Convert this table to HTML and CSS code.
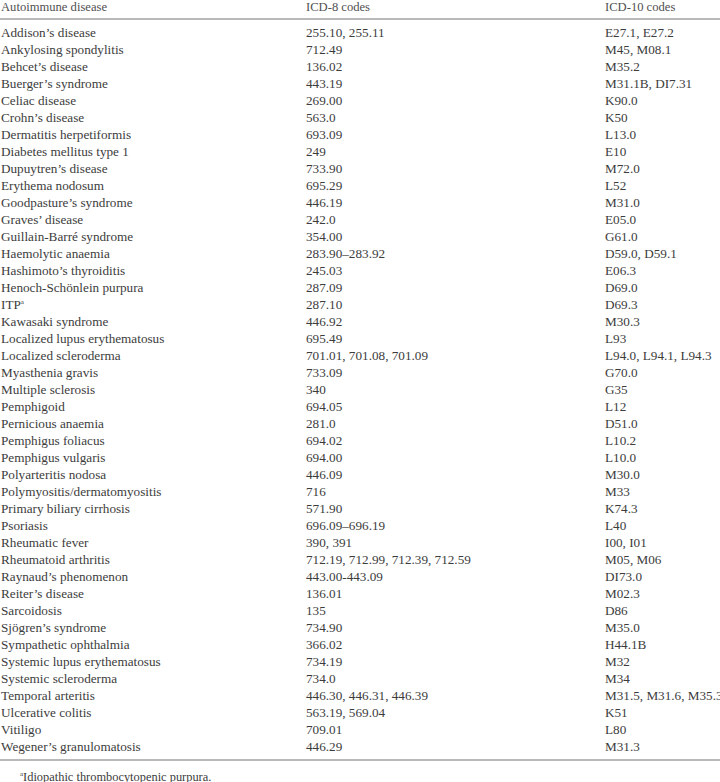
FILE: index.html
```html
<!DOCTYPE html>
<html>
<head>
<meta charset="utf-8">
<link rel="stylesheet" href="styles.css">
</head>
<body>
<table class="codes">
  <colgroup><col class="c1"><col class="c2"><col class="c3"></colgroup>
  <thead>
    <tr><th>Autoimmune disease</th><th>ICD-8 codes</th><th>ICD-10 codes</th></tr>
  </thead>
  <tbody>
    <tr class="first"><td>Addison’s disease</td><td>255.10, 255.11</td><td>E27.1, E27.2</td></tr>
    <tr><td>Ankylosing spondylitis</td><td>712.49</td><td>M45, M08.1</td></tr>
    <tr><td>Behcet’s disease</td><td>136.02</td><td>M35.2</td></tr>
    <tr><td>Buerger’s syndrome</td><td>443.19</td><td>M31.1B, DI7.31</td></tr>
    <tr><td>Celiac disease</td><td>269.00</td><td>K90.0</td></tr>
    <tr><td>Crohn’s disease</td><td>563.0</td><td>K50</td></tr>
    <tr><td>Dermatitis herpetiformis</td><td>693.09</td><td>L13.0</td></tr>
    <tr><td>Diabetes mellitus type 1</td><td>249</td><td>E10</td></tr>
    <tr><td>Dupuytren’s disease</td><td>733.90</td><td>M72.0</td></tr>
    <tr><td>Erythema nodosum</td><td>695.29</td><td>L52</td></tr>
    <tr><td>Goodpasture’s syndrome</td><td>446.19</td><td>M31.0</td></tr>
    <tr><td>Graves’ disease</td><td>242.0</td><td>E05.0</td></tr>
    <tr><td>Guillain-Barré syndrome</td><td>354.00</td><td>G61.0</td></tr>
    <tr><td>Haemolytic anaemia</td><td>283.90–283.92</td><td>D59.0, D59.1</td></tr>
    <tr><td>Hashimoto’s thyroiditis</td><td>245.03</td><td>E06.3</td></tr>
    <tr><td>Henoch-Schönlein purpura</td><td>287.09</td><td>D69.0</td></tr>
    <tr><td>ITP<sup>a</sup></td><td>287.10</td><td>D69.3</td></tr>
    <tr><td>Kawasaki syndrome</td><td>446.92</td><td>M30.3</td></tr>
    <tr><td>Localized lupus erythematosus</td><td>695.49</td><td>L93</td></tr>
    <tr><td>Localized scleroderma</td><td>701.01, 701.08, 701.09</td><td>L94.0, L94.1, L94.3</td></tr>
    <tr><td>Myasthenia gravis</td><td>733.09</td><td>G70.0</td></tr>
    <tr><td>Multiple sclerosis</td><td>340</td><td>G35</td></tr>
    <tr><td>Pemphigoid</td><td>694.05</td><td>L12</td></tr>
    <tr><td>Pernicious anaemia</td><td>281.0</td><td>D51.0</td></tr>
    <tr><td>Pemphigus foliacus</td><td>694.02</td><td>L10.2</td></tr>
    <tr><td>Pemphigus vulgaris</td><td>694.00</td><td>L10.0</td></tr>
    <tr><td>Polyarteritis nodosa</td><td>446.09</td><td>M30.0</td></tr>
    <tr><td>Polymyositis/dermatomyositis</td><td>716</td><td>M33</td></tr>
    <tr><td>Primary biliary cirrhosis</td><td>571.90</td><td>K74.3</td></tr>
    <tr><td>Psoriasis</td><td>696.09–696.19</td><td>L40</td></tr>
    <tr><td>Rheumatic fever</td><td>390, 391</td><td>I00, I01</td></tr>
    <tr><td>Rheumatoid arthritis</td><td>712.19, 712.99, 712.39, 712.59</td><td>M05, M06</td></tr>
    <tr><td>Raynaud’s phenomenon</td><td>443.00-443.09</td><td>DI73.0</td></tr>
    <tr><td>Reiter’s disease</td><td>136.01</td><td>M02.3</td></tr>
    <tr><td>Sarcoidosis</td><td>135</td><td>D86</td></tr>
    <tr><td>Sjögren’s syndrome</td><td>734.90</td><td>M35.0</td></tr>
    <tr><td>Sympathetic ophthalmia</td><td>366.02</td><td>H44.1B</td></tr>
    <tr><td>Systemic lupus erythematosus</td><td>734.19</td><td>M32</td></tr>
    <tr><td>Systemic scleroderma</td><td>734.0</td><td>M34</td></tr>
    <tr><td>Temporal arteritis</td><td>446.30, 446.31, 446.39</td><td>M31.5, M31.6, M35.3</td></tr>
    <tr><td>Ulcerative colitis</td><td>563.19, 569.04</td><td>K51</td></tr>
    <tr><td>Vitiligo</td><td>709.01</td><td>L80</td></tr>
    <tr class="last"><td>Wegener’s granulomatosis</td><td>446.29</td><td>M31.3</td></tr>
  </tbody>
</table>
<p class="note"><sup>a</sup>Idiopathic thrombocytopenic purpura.</p>
</body>
</html>
```
FILE: styles.css
```css
html, body {
  margin: 0;
  padding: 0;
  background: #ffffff;
  overflow: hidden;
}
body {
  width: 720px;
  height: 782px;
  font-family: "Liberation Serif", "Times New Roman", serif;
  color: #3c3c3c;
}
.codes {
  width: 720px;
  table-layout: fixed;
  border-collapse: collapse;
  font-size: 13.2px;
}
.c1 { width: 305px; }
.c2 { width: 299px; }
.c3 { width: 116px; }
.codes th,
.codes td {
  padding: 0 0 0 1px;
  text-align: left;
  white-space: nowrap;
  overflow: visible;
  font-weight: normal;
}
.codes th {
  line-height: 14px;
  padding-bottom: 4px;
  border-bottom: 2px solid #b9b9b9;
  color: #505050;
  font-size: 12.6px;
}
.codes td {
  height: 17px;
  line-height: 17px;
}
.codes tr.first td {
  padding-top: 4px;
}
.codes tr.last td {
  padding-bottom: 4px;
  border-bottom: 2px solid #b9b9b9;
}
.codes sup,
.note sup {
  font-size: 7px;
  line-height: 0;
  vertical-align: 5px;
}
.note {
  margin: 9px 0 0 20px;
  font-size: 12.4px;
  line-height: 14px;
  color: #3c3c3c;
}
```
